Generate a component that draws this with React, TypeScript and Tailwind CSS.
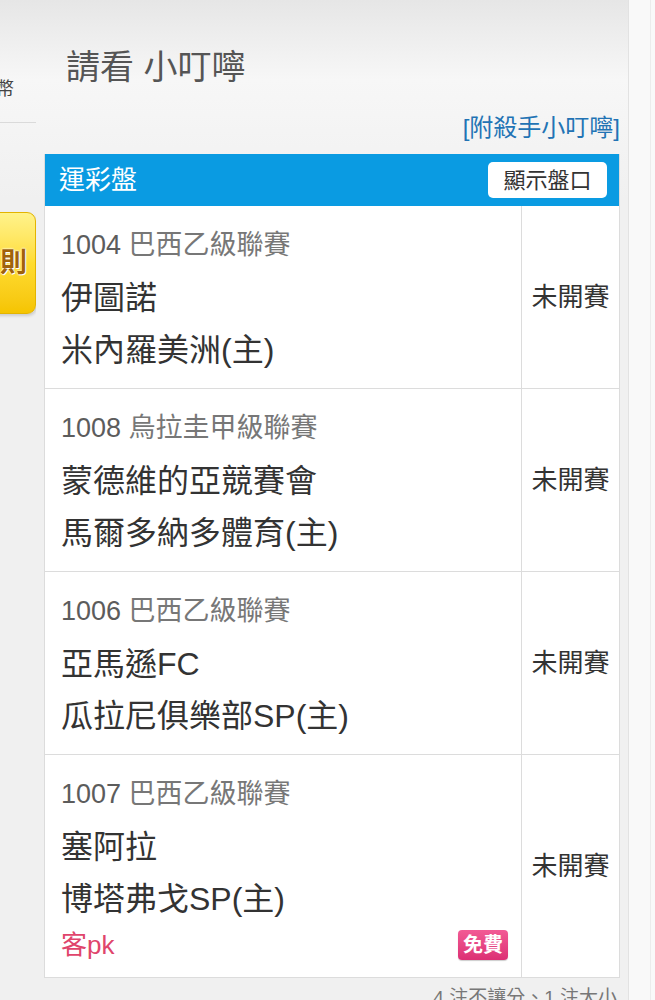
import React from 'react'

type Match = { id: string; league: string; home: string; away: string; status: string; extra?: boolean }

const matches: Match[] = [
  { id: '1004', league: '巴西乙級聯賽', home: '伊圖諾', away: '米內羅美洲(主)', status: '未開賽' },
  { id: '1008', league: '烏拉圭甲級聯賽', home: '蒙德維的亞競賽會', away: '馬爾多納多體育(主)', status: '未開賽' },
  { id: '1006', league: '巴西乙級聯賽', home: '亞馬遜FC', away: '瓜拉尼俱樂部SP(主)', status: '未開賽' },
  { id: '1007', league: '巴西乙級聯賽', home: '塞阿拉', away: '博塔弗戈SP(主)', status: '未開賽', extra: true },
]

const font = { fontFamily: '"Liberation Sans", "Noto Sans CJK TC", sans-serif' }

const MatchRow = ({ m }: { m: Match }) => (
  <div className="flex border-b border-[#dcdcdc] last:border-b-0">
    <div className="flex-1 pl-4 pt-[21px] pb-[12px]">
      <p className="text-[27px] leading-[36px] text-[#777] mb-[9px]">
        <span className="text-[#5c5c5c]">{m.id}</span> {m.league}
      </p>
      <p className="text-[32px] leading-[52px] text-[#333]">{m.home}</p>
      <p className="text-[32px] leading-[52px] text-[#333]">{m.away}</p>
      {m.extra && (
        <div className="flex justify-between items-center pr-[13px] h-[40px]">
          <span className="text-[26px] text-[#e0456c]">客pk</span>
          <span className="text-[20px] font-bold leading-[30px] px-[5px] rounded-[4px] text-white bg-gradient-to-b from-[#f25a95] to-[#dc2f74] shadow-[0_1px_1px_rgba(0,0,0,0.2)]">免費</span>
        </div>
      )}
    </div>
    <div className="w-[98px] border-l border-[#dcdcdc] flex items-center justify-center text-[26px] text-[#333]">
      {m.status}
    </div>
  </div>
)

const App = () => {
  return (
    <div style={font} className="w-[655px] h-[1000px] overflow-hidden flex bg-gradient-to-b from-[#e6e6e6] via-[#f7f7f7] via-[8%] to-[#f0f0f0] to-[20%]">
      {/* left side strip */}
      <div className="w-[36px] shrink-0 flex flex-col overflow-hidden">
        <div className="h-[123px] border-b border-[#dadada] flex items-end pb-[24px]">
          <span className="text-[18px] text-[#444] -ml-[4px] leading-none">幣</span>
        </div>
        <div className="mt-[89px] h-[102px] -ml-[10px] w-[46px] rounded-r-[9px] border border-[#e3b400] bg-gradient-to-b from-[#fff38a] via-[#ffdc2e] to-[#f5c400] flex items-center justify-end pr-[8px] shadow-[1px_2px_3px_rgba(0,0,0,0.15)]">
          <span className="text-[27px] font-bold text-[#a0620a] [text-shadow:0_0_2px_#fff,0_0_2px_#fff,1px_1px_0_#fff]">則</span>
        </div>
      </div>

      {/* main column */}
      <div className="w-[576px] ml-[8px] shrink-0 flex flex-col pt-[45px]">
        <h1 className="pl-[22px] text-[34px] leading-[44px] text-[#555]">請看 小叮嚀</h1>
        <div className="mt-[24px] flex justify-end">
          <span className="text-[24px] leading-[30px] text-[#2273b4]">[附殺手小叮嚀]</span>
        </div>

        <div className="mt-[11px] bg-white border-x border-b border-[#dcdcdc]">
          <div className="h-[52px] bg-[#0a9be2] flex items-center justify-between pl-[14px] pr-[12px]">
            <span className="text-[26px] text-white">運彩盤</span>
            <button className="h-[36px] w-[119px] rounded-[5px] bg-white text-[22px] text-[#333]">顯示盤口</button>
          </div>
          {matches.map((m) => (
            <MatchRow key={m.id} m={m} />
          ))}
        </div>

        <div className="mt-[8px] text-right pr-[3px] text-[19px] leading-[24px] text-[#777]">4 注不讓分、1 注大小</div>
      </div>

      {/* right gutter */}
      <div className="ml-[8px] flex-1 border-l border-[#e2e2e2] bg-[#f9f9f9] flex">
        <div className="ml-auto mr-[4px] w-px bg-[#ececec]" />
      </div>
    </div>
  )
}

export default App
